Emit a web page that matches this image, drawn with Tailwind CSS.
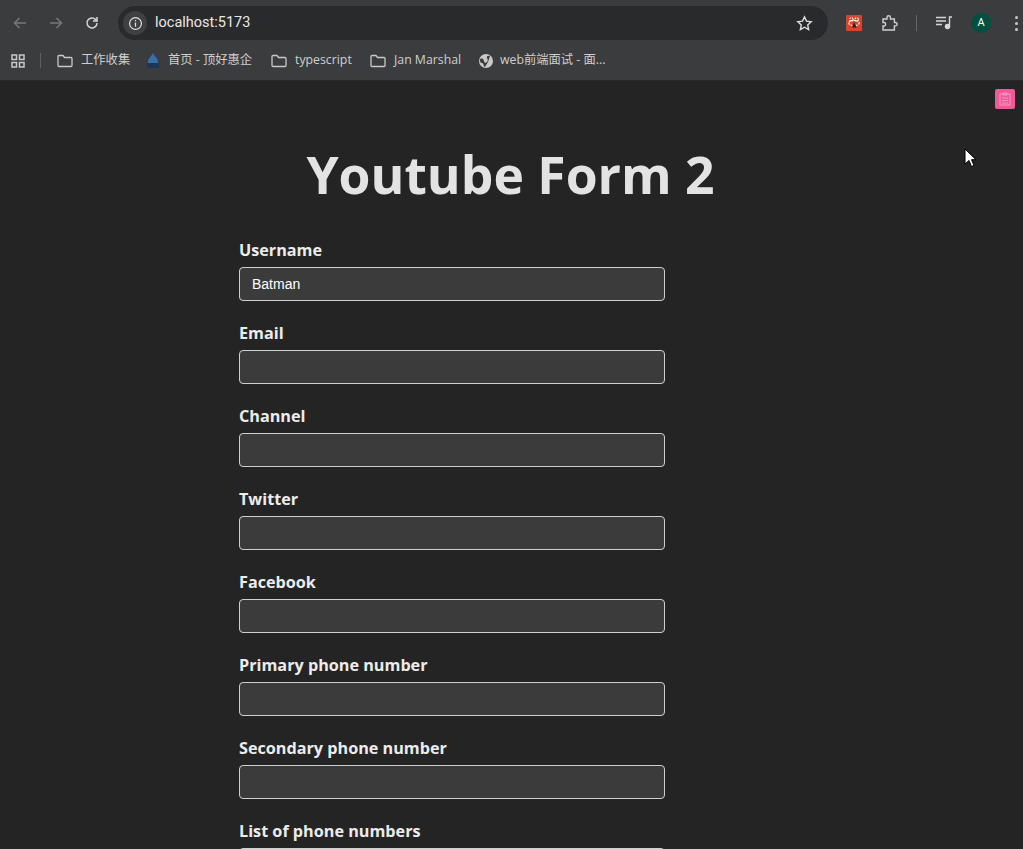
<!DOCTYPE html>
<html lang="en">
<head>
  <meta charset="UTF-8">
  <meta name="viewport" content="width=device-width, initial-scale=1.0">
  <title>Youtube Form 2</title>
  <script src="https://cdn.jsdelivr.net/npm/@tailwindcss/browser@4"></script>
</head>
<body class="relative h-[849px] overflow-hidden bg-[#242424] font-['Open_Sans','Noto_Sans_CJK_SC',sans-serif] text-[#e4e4e4]">

  <!-- browser toolbar -->
  <header class="h-[81px] border-b border-[#2c2a2a] bg-[#3b3c3e]">
    <div class="flex h-[40px] items-center pt-[6px]">
      <div class="flex w-[118px] items-center pl-[12px] text-[#77787a]">
        <svg class="h-4 w-4" viewBox="0 0 16 16" fill="none" stroke="currentColor" stroke-width="1.5"><path d="M14 8H2.5M7.500 3 2.500 8l5 5"/></svg>
        <svg class="ml-[20px] h-4 w-4" viewBox="0 0 16 16" fill="none" stroke="currentColor" stroke-width="1.5"><path d="M2 8h11.500M8.500 3l5 5-5 5"/></svg>
        <svg class="ml-[20px] h-4 w-4 text-[#d6d6d6]" viewBox="0 0 16 16" fill="none" stroke="currentColor" stroke-width="1.5"><path d="M13 8a5 5 0 1 1-1.500-3.600L13 6"/><path d="M13 2v4H9"/></svg>
      </div>
      <div class="flex h-[34px] w-[710px] items-center rounded-full bg-[#292a2b] pl-[5px]">
        <span class="flex h-[24px] w-[24px] items-center justify-center rounded-full bg-[#3f4042]">
          <svg class="h-[15px] w-[15px] text-[#e0e0e0]" viewBox="0 0 16 16" fill="none" stroke="currentColor" stroke-width="1.300"><circle cx="8" cy="8" r="6.300"/><path d="M8 7v4.500M8 4.300v1.400"/></svg>
        </span>
        <span class="ml-[8px] font-['Roboto',sans-serif] text-[14.500px] text-[#e8e8e8]">localhost:5173</span>
        <svg class="ml-auto mr-[15px] h-[17px] w-[17px] text-[#dedede]" viewBox="0 0 16 16" fill="none" stroke="currentColor" stroke-width="1.300"><path d="m8 1.800 1.900 4 4.400.500-3.300 3 .900 4.400L8 11.500l-3.900 2.200.900-4.400-3.300-3 4.400-.500z"/></svg>
      </div>
      <div class="flex flex-1 items-center">
        <span class="ml-[18px] flex h-4 w-4 items-center justify-center rounded-[1px] bg-[#d4452f]">
          <svg class="h-[14px] w-[14px] text-white" viewBox="0 0 16 16" fill="none" stroke="currentColor" stroke-width="1.300" stroke-dasharray="2 1"><ellipse cx="8" cy="8" rx="6" ry="3"/><circle cx="5" cy="4" r="2"/><circle cx="11" cy="4" r="2"/><path d="M8 7l3 6H6z" fill="#222" stroke="none"/></svg>
        </span>
        <svg class="ml-[19px] h-[18px] w-[18px] text-[#cfcfcf]" viewBox="0 0 18 18" fill="none" stroke="currentColor" stroke-width="1.400"><path d="M2 5h4V3.500a1.700 1.700 0 0 1 3.400 0V5h4v3.500h1a1.700 1.700 0 0 1 0 3.400h-1V16H2v-4h1.300a1.800 1.800 0 0 0 0-3.500H2z"/></svg>
        <span class="ml-[17px] h-[16px] w-[1px] bg-[#66676a]"></span>
        <svg class="ml-[19px] h-4 w-[17px] text-[#d6d6d6]" viewBox="0 0 17 16" fill="none" stroke="currentColor" stroke-width="1.400"><path d="M0 2.500h10M0 6h10M0 9.500h6"/><path d="M13.500 11.500V2H16"/><circle cx="11.500" cy="11.500" r="2" fill="currentColor"/></svg>
        <span class="ml-[18px] flex h-5 w-5 items-center justify-center rounded-full bg-[#01503f] font-['Roboto',sans-serif] text-[11px] text-white">A</span>
        <span class="ml-[24px] flex flex-col gap-[3px]">
          <i class="h-[3px] w-[3px] rounded-full bg-[#c8c8c8]"></i>
          <i class="h-[3px] w-[3px] rounded-full bg-[#c8c8c8]"></i>
          <i class="h-[3px] w-[3px] rounded-full bg-[#c8c8c8]"></i>
        </span>
      </div>
    </div>

    <!-- bookmarks -->
    <nav class="flex h-[40px] items-center pt-[1px] text-[12.300px] text-[#cfcfcf]">
      <svg class="ml-[11px] h-[14px] w-[14px] text-[#c9c9c9]" viewBox="0 0 14 14" fill="none" stroke="currentColor" stroke-width="1.500"><rect x="1" y="1" width="4.500" height="4.500"/><rect x="8.500" y="1" width="4.500" height="4.500"/><rect x="1" y="8.500" width="4.500" height="4.500"/><rect x="8.500" y="8.500" width="4.500" height="4.500"/></svg>
      <span class="ml-[15px] h-[15px] w-[1px] bg-[#5f6063]"></span>
      <svg class="ml-[16px] h-[14px] w-4 text-[#c9c9c9]" viewBox="0 0 16 14" fill="none" stroke="currentColor" stroke-width="1.300"><path d="M1 2.500a1 1 0 0 1 1-1h4l1.500 2H14a1 1 0 0 1 1 1v7a1 1 0 0 1-1 1H2a1 1 0 0 1-1-1z"/></svg>
      <span class="ml-[8px] w-[48px] whitespace-nowrap">工作收集</span>
      <svg class="ml-[18px] h-4 w-[12px]" viewBox="0 0 12 16"><path d="M6 0C5 3 1 5 1 9v2h10V9C11 5 7 3 6 0z" fill="#3a6ea8"/><path d="M0 10h12v5H0z" fill="#1c3558"/></svg>
      <span class="ml-[9px] w-[85px] whitespace-nowrap">首页 - 顶好惠企</span>
      <svg class="ml-[18px] h-[14px] w-4 text-[#c9c9c9]" viewBox="0 0 16 14" fill="none" stroke="currentColor" stroke-width="1.300"><path d="M1 2.500a1 1 0 0 1 1-1h4l1.500 2H14a1 1 0 0 1 1 1v7a1 1 0 0 1-1 1H2a1 1 0 0 1-1-1z"/></svg>
      <span class="ml-[8px] w-[58px] whitespace-nowrap">typescript</span>
      <svg class="ml-[17px] h-[14px] w-4 text-[#c9c9c9]" viewBox="0 0 16 14" fill="none" stroke="currentColor" stroke-width="1.300"><path d="M1 2.500a1 1 0 0 1 1-1h4l1.500 2H14a1 1 0 0 1 1 1v7a1 1 0 0 1-1 1H2a1 1 0 0 1-1-1z"/></svg>
      <span class="ml-[8px] w-[68px] whitespace-nowrap">Jan Marshal</span>
      <svg class="ml-[17px] h-[14px] w-[14px] text-[#c9c9c9]" viewBox="0 0 14 14"><circle cx="7" cy="7" r="7" fill="currentColor"/><path d="M1 5c2-1 4 0 4 2s2 2 3 1 1-3 0-4 1-3 3-2l-2 6-3 5C4 12 5 9 3 9S1 7 1 5z" fill="#3b3c3e"/></svg>
      <span class="ml-[7px] whitespace-nowrap">web前端面试 - 面...</span>
    </nav>
  </header>

  <!-- floating devtools button -->
  <button class="absolute left-[995px] top-[89px] flex h-5 w-5 items-center justify-center rounded-[2px] bg-[#ee5a98]">
    <svg class="h-[14px] w-[14px] text-[#f7a5c8]" viewBox="0 0 14 14" fill="none" stroke="currentColor" stroke-width="0.800"><rect x="2" y="2" width="10" height="11"/><path d="M5 1h4v2H5zM4 6h6M4 8.500h6M4 11h6"/></svg>
  </button>

  <main>
    <h1 class="mt-[61px] pr-[2px] text-center text-[51.600px] font-bold leading-[64px] text-[#e3e3e3]">Youtube Form 2</h1>

    <form class="ml-[239px] mt-[33px] w-[426px]">
      <div class="h-[83px]">
        <label class="block h-[28px] text-[16.200px] font-bold leading-[22px] text-[#ececec]">Username</label>
        <input type="text" value="Batman" class="block h-[34px] w-full rounded-[4px] border border-[#cfcfcf] bg-[#3b3b3b] px-[12px] font-['Liberation_Sans',sans-serif] text-[14px] text-white">
      </div>
      <div class="h-[83px]">
        <label class="block h-[28px] text-[16.200px] font-bold leading-[22px] text-[#ececec]">Email</label>
        <input type="text" class="block h-[34px] w-full rounded-[4px] border border-[#cfcfcf] bg-[#3b3b3b] px-[12px] text-[14px] text-white">
      </div>
      <div class="h-[83px]">
        <label class="block h-[28px] text-[16.200px] font-bold leading-[22px] text-[#ececec]">Channel</label>
        <input type="text" class="block h-[34px] w-full rounded-[4px] border border-[#cfcfcf] bg-[#3b3b3b] px-[12px] text-[14px] text-white">
      </div>
      <div class="h-[83px]">
        <label class="block h-[28px] text-[16.200px] font-bold leading-[22px] text-[#ececec]">Twitter</label>
        <input type="text" class="block h-[34px] w-full rounded-[4px] border border-[#cfcfcf] bg-[#3b3b3b] px-[12px] text-[14px] text-white">
      </div>
      <div class="h-[83px]">
        <label class="block h-[28px] text-[16.200px] font-bold leading-[22px] text-[#ececec]">Facebook</label>
        <input type="text" class="block h-[34px] w-full rounded-[4px] border border-[#cfcfcf] bg-[#3b3b3b] px-[12px] text-[14px] text-white">
      </div>
      <div class="h-[83px]">
        <label class="block h-[28px] text-[16.200px] font-bold leading-[22px] text-[#ececec]">Primary phone number</label>
        <input type="text" class="block h-[34px] w-full rounded-[4px] border border-[#cfcfcf] bg-[#3b3b3b] px-[12px] text-[14px] text-white">
      </div>
      <div class="h-[83px]">
        <label class="block h-[28px] text-[16.200px] font-bold leading-[22px] text-[#ececec]">Secondary phone number</label>
        <input type="text" class="block h-[34px] w-full rounded-[4px] border border-[#cfcfcf] bg-[#3b3b3b] px-[12px] text-[14px] text-white">
      </div>
      <div class="h-[83px]">
        <label class="block h-[28px] text-[16.200px] font-bold leading-[22px] text-[#ececec]">List of phone numbers</label>
        <input type="text" class="block h-[34px] w-full rounded-[4px] border border-[#cfcfcf] bg-[#3b3b3b] px-[12px] text-[14px] text-white">
      </div>
    </form>
  </main>

  <!-- mouse cursor -->
  <svg class="absolute left-[964px] top-[148px] h-[20px] w-[13px]" viewBox="0 0 13 20"><path d="M1 1v15l4-3.500 2.500 6 2.500-1-2.500-5.800H12z" fill="#fff" stroke="#000" stroke-width="1"/></svg>
</body>
</html>
